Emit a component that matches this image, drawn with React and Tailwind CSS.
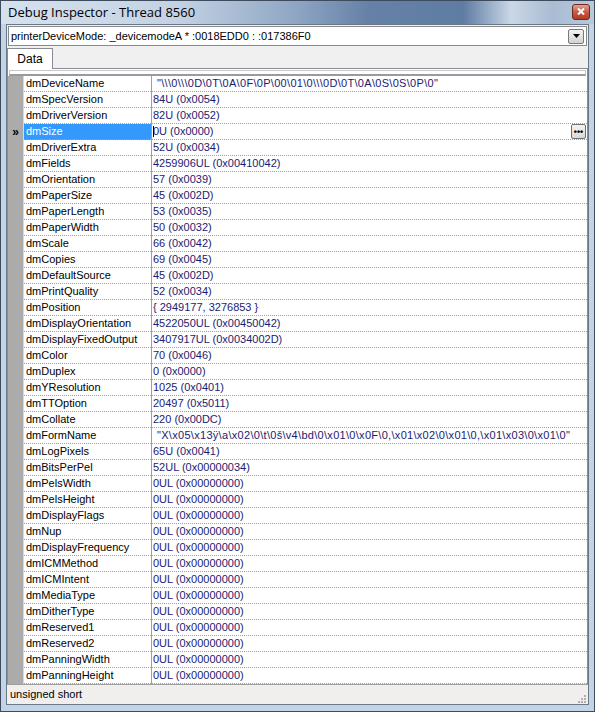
import React from "react";

const ROWS = [
  ["dmDeviceName", '"\\\\\\0\\\\\\0D\\0T\\0A\\0F\\0P\\00\\01\\0\\\\\\0D\\0T\\0A\\0S\\0S\\0P\\0"', true],
  ["dmSpecVersion", "84U (0x0054)"],
  ["dmDriverVersion", "82U (0x0052)"],
  ["dmSize", "0U (0x0000)"],
  ["dmDriverExtra", "52U (0x0034)"],
  ["dmFields", "4259906UL (0x00410042)"],
  ["dmOrientation", "57 (0x0039)"],
  ["dmPaperSize", "45 (0x002D)"],
  ["dmPaperLength", "53 (0x0035)"],
  ["dmPaperWidth", "50 (0x0032)"],
  ["dmScale", "66 (0x0042)"],
  ["dmCopies", "69 (0x0045)"],
  ["dmDefaultSource", "45 (0x002D)"],
  ["dmPrintQuality", "52 (0x0034)"],
  ["dmPosition", "{ 2949177, 3276853 }"],
  ["dmDisplayOrientation", "4522050UL (0x00450042)"],
  ["dmDisplayFixedOutput", "3407917UL (0x0034002D)"],
  ["dmColor", "70 (0x0046)"],
  ["dmDuplex", "0 (0x0000)"],
  ["dmYResolution", "1025 (0x0401)"],
  ["dmTTOption", "20497 (0x5011)"],
  ["dmCollate", "220 (0x00DC)"],
  ["dmFormName", '"X\\x05\\x13ÿ\\a\\x02\\0\\t\\0š\\v4\\bd\\0\\x01\\0\\x0F\\0,\\x01\\x02\\0\\x01\\0,\\x01\\x03\\0\\x01\\0"', true],
  ["dmLogPixels", "65U (0x0041)"],
  ["dmBitsPerPel", "52UL (0x00000034)"],
  ["dmPelsWidth", "0UL (0x00000000)"],
  ["dmPelsHeight", "0UL (0x00000000)"],
  ["dmDisplayFlags", "0UL (0x00000000)"],
  ["dmNup", "0UL (0x00000000)"],
  ["dmDisplayFrequency", "0UL (0x00000000)"],
  ["dmICMMethod", "0UL (0x00000000)"],
  ["dmICMIntent", "0UL (0x00000000)"],
  ["dmMediaType", "0UL (0x00000000)"],
  ["dmDitherType", "0UL (0x00000000)"],
  ["dmReserved1", "0UL (0x00000000)"],
  ["dmReserved2", "0UL (0x00000000)"],
  ["dmPanningWidth", "0UL (0x00000000)"],
  ["dmPanningHeight", "0UL (0x00000000)"],
];

const SELECTED = "dmSize";

const Row = ({ name, value, indent }) => {
  const selected = name === SELECTED;

  return (
    <div className="flex h-[16px]">
      <div className="flex w-[15px] items-center justify-center bg-[#ababab] text-[12px] font-bold leading-none text-black">
        {selected ? "»" : ""}
      </div>
      <div className="w-[1px] bg-[#d8d8d8]" />
      <div
        className={`w-[127px] truncate border-b border-dotted border-[#a0a0a0] pl-[2px] leading-[15px] ${
          selected ? "bg-[#3399ff] text-white" : "text-black"
        }`}
      >
        {name}
      </div>
      <div className="w-[1px] bg-[#a0a0a0]" />
      <div
        className={`relative flex flex-1 items-center border-b border-dotted border-[#a0a0a0] leading-[15px] text-[#1b1b72] ${
          indent ? "pl-[5px] tracking-[0.3px]" : "pl-[1px]"
        }`}
      >
        {selected && <span className="absolute left-[1px] top-[2px] h-[11px] w-[1px] bg-black" />}
        <span className="whitespace-pre">{value}</span>
        {selected && (
          <div className="absolute right-[1px] top-[0px] flex h-[15px] w-[15px] items-end justify-center rounded-[2px] border border-[#707070] bg-gradient-to-b from-[#f4f4f4] to-[#d8d8d8] pb-[3px]">
            <span className="text-[9px] font-bold leading-[6px] text-black">•••</span>
          </div>
        )}
      </div>
    </div>
  );
};

export default function App() {
  return (
    <div
      className="flex h-[712px] w-[595px] flex-col border border-[#3e4b5c] bg-[#c3d4e7] text-[11px]"
      style={{ fontFamily: '"Liberation Sans", Arial, sans-serif' }}
    >
      {/* title bar */}
      <div className="flex h-[24px] items-center bg-[linear-gradient(90deg,#d5e1ee_0%,#c3d2e3_30%,#8ea5c3_50%,#6581a7_62%,#5f7ca3_78%,#cad7e6_86%,#a9bcd3_93%,#b8c9dc_100%)] pl-[7px] pr-[4px]">
        <span
          className="text-[13px] text-black"
          style={{ fontFamily: '"Open Sans", "Noto Sans", sans-serif' }}
        >
          Debug Inspector - Thread 8560
        </span>
        <div className="ml-auto mb-[2px] flex h-[16px] w-[18px] items-center justify-center rounded-[3px] border border-[#6b2b22] bg-gradient-to-b from-[#e4a394] via-[#c75a45] to-[#b53a24]">
          <svg width="8" height="7" viewBox="0 0 8 7">
            <path d="M1 0.5 L7 6.5 M7 0.5 L1 6.5" stroke="white" strokeWidth="2" />
          </svg>
        </div>
      </div>

      {/* client area */}
      <div className="mx-[5px] mb-[6px] flex flex-1 flex-col border border-[#6a7888] bg-[#f0f0f0]">
        {/* object combo */}
        <div className="mx-[1px] mt-[1px] flex h-[20px] items-center border border-[#8a8a8a] bg-white pl-[2px] pr-[2px]">
          <span className="flex-1 truncate text-[11px] text-black">
            printerDeviceMode: _devicemodeA * :0018EDD0 : :017386F0
          </span>
          <div className="flex h-[15px] w-[16px] items-center justify-center rounded-[2px] border border-[#7a7a7a] bg-gradient-to-b from-[#f3f3f3] to-[#d2d2d2]">
            <svg width="7" height="4" viewBox="0 0 7 4">
              <path d="M0 0 H7 L3.5 4 Z" fill="black" />
            </svg>
          </div>
        </div>

        {/* tabs */}
        <div className="mt-[2px] flex h-[21px] items-end">
          <div className="flex h-[21px] w-[46px] items-center justify-center border border-b-0 border-[#898c95] bg-white text-[12px] text-black">
            Data
          </div>
          <div className="h-[1px] flex-1 bg-[#898c95]" />
        </div>

        {/* grid */}
        <div className="flex flex-1 flex-col border-x border-[#898c95] bg-white">
          <div className="mx-[1px] mt-[1px] h-[6px] border border-[#c8c8c8] border-b-[2px] border-b-[#9a9a9a]" />
          <div className="flex flex-col">
            {ROWS.map(([name, value, indent]) => (
              <Row key={name} name={name} value={value} indent={indent} />
            ))}
          </div>
          <div className="flex-1 bg-white" />
        </div>

        {/* status */}
        <div className="flex h-[20px] items-center border-t border-[#a0a0a0] bg-[#f0efed] pl-[3px] text-[11px] text-black">
          unsigned short
          <svg className="ml-auto mr-[2px] mt-[6px]" width="10" height="10" viewBox="0 0 10 10">
            {[
              [8, 2],
              [5, 5],
              [8, 5],
              [2, 8],
              [5, 8],
              [8, 8],
            ].map(([x, y]) => (
              <rect key={`${x}-${y}`} x={x} y={y} width="2" height="2" fill="#b0b0b0" />
            ))}
          </svg>
        </div>
      </div>
    </div>
  );
}
